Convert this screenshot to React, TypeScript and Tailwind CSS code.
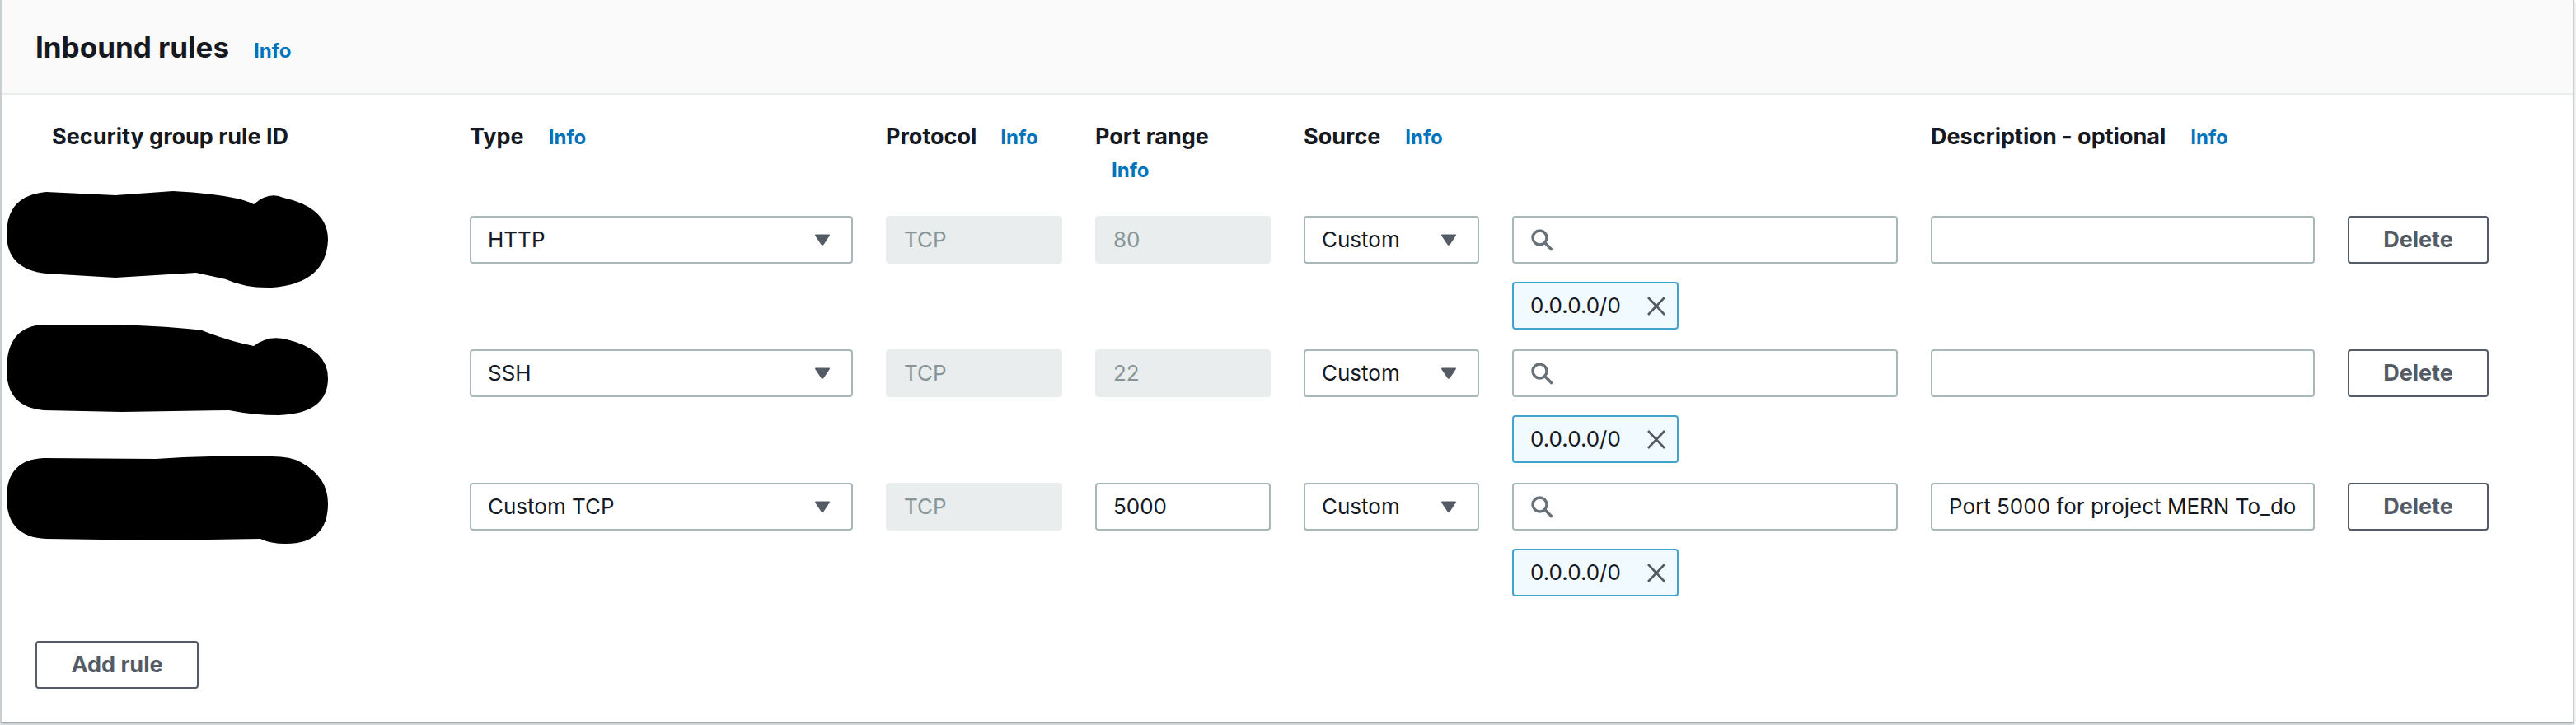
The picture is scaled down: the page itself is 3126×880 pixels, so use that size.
import React from 'react'

const cols = 'grid grid-cols-[488px_465px_214px_213px_213px_468px_466px_171px] gap-x-[40px]'

type Rule = {
  type: string
  port: string
  portEditable?: boolean
  description: string
  blob: { d: string; h: number; top: number }
}

const rules: Rule[] = [
  {
    type: 'HTTP',
    port: '80',
    description: '',
    blob: {
      top: -30,
      h: 118,
      d: 'M48 1 L132 5 L202 0 Q245 2 280 9 Q292 12 300 16 Q318 0 336 8 Q390 20 390 59 Q388 112 322 117 Q290 118 266 107 L230 99 L132 105 L48 100 Q0 95 0 52 Q0 5 48 1 Z',
    },
  },
  {
    type: 'SSH',
    port: '22',
    description: '',
    blob: {
      top: -30,
      h: 111,
      d: 'M45 0 L132 0 Q200 2 237 7 Q270 20 300 26 Q318 12 340 18 Q390 30 390 65 Q390 108 330 110 Q300 110 270 104 L140 106 L45 104 Q0 100 0 55 Q0 2 45 0 Z',
    },
  },
  {
    type: 'Custom TCP',
    port: '5000',
    portEditable: true,
    description: 'Port 5000 for project MERN To_do',
    blob: {
      top: -32,
      h: 107,
      d: 'M45 2 L181 3 Q220 0 259 0 L322 0 Q345 0 357 7 Q390 25 390 57 Q390 106 339 106 Q320 106 308 100 L181 102 L48 100 Q0 98 0 50 Q0 4 45 2 Z',
    },
  },
]

function Info() {
  return <span className="text-[24px] font-bold text-[#0073bb]">Info</span>
}

function Caret() {
  return (
    <svg width="20" height="14" viewBox="0 0 20 14">
      <path d="M2 1.5 H18 L11 12 Q10 13.5 9 12 Z" fill="#545b64" stroke="#545b64" strokeWidth="2" strokeLinejoin="round" />
    </svg>
  )
}

function Select({ value }: { value: string }) {
  return (
    <div className="h-[58px] border-2 border-[#aab7b8] rounded-[4px] bg-white flex items-center justify-between pl-[20px] pr-[25px] text-[26px] leading-[32px] text-[#16191f]">
      <span>{value}</span>
      <Caret />
    </div>
  )
}

function TextBox({ value, disabled }: { value: string; disabled?: boolean }) {
  return (
    <div
      className={
        disabled
          ? 'h-[58px] border-2 border-[#eaeded] rounded-[4px] bg-[#eaeded] flex items-center px-[20px] text-[26px] leading-[32px] text-[#879596]'
          : 'h-[58px] border-2 border-[#aab7b8] rounded-[4px] bg-white flex items-center pl-[20px] pr-[16px] text-[26px] leading-[32px] text-[#16191f]'
      }
    >
      <div className="whitespace-nowrap">{value}</div>
    </div>
  )
}

function SearchBox() {
  return (
    <div className="h-[58px] border-2 border-[#aab7b8] rounded-[4px] bg-white flex items-center pl-[20px]">
      <svg width="30" height="29" viewBox="0 0 30 29" fill="none">
        <circle cx="11.5" cy="11.5" r="8.5" stroke="#687078" strokeWidth="3.4" />
        <path d="M17.8 17.8 L25.5 25.5" stroke="#687078" strokeWidth="3.6" strokeLinecap="round" />
      </svg>
    </div>
  )
}

function Token() {
  return (
    <div className="mt-[22px] w-[202px] h-[58px] border-2 border-[#44a3cc] rounded-[4px] bg-[#f1faff] flex items-center justify-between pl-[20px] pr-[13px] text-[26px] leading-[32px] text-[#16191f]">
      <span>0.0.0.0/0</span>
      <svg width="24" height="25" viewBox="0 0 24 25">
        <path d="M2 2 L22 23 M22 2 L2 23" stroke="#545b64" strokeWidth="2.6" />
      </svg>
    </div>
  )
}

function OutlineButton({ label, className }: { label: string; className: string }) {
  return (
    <button
      className={
        'h-[58px] border-2 border-[#545b64] rounded-[4px] bg-white text-[27px] font-bold text-[#545b64] flex items-center justify-center ' +
        className
      }
    >
      {label}
    </button>
  )
}

function RuleRow({ rule }: { rule: Rule }) {
  return (
    <div className={cols + ' items-start'}>
      <div className="relative h-[58px]">
        {/* redacted rule id */}
        <svg
          className="absolute left-[-34px]"
          style={{ top: rule.blob.top }}
          width="392"
          height={rule.blob.h}
          viewBox={`0 0 392 ${rule.blob.h}`}
        >
          <path d={rule.blob.d} fill="#000" />
        </svg>
      </div>
      <Select value={rule.type} />
      <TextBox value="TCP" disabled />
      <TextBox value={rule.port} disabled={!rule.portEditable} />
      <Select value="Custom" />
      <div className="flex flex-col">
        <SearchBox />
        <Token />
      </div>
      <TextBox value={rule.description} />
      <OutlineButton label="Delete" className="w-full" />
    </div>
  )
}

export default function App() {
  return (
    <div className="w-[3126px] h-[880px] bg-white font-['Inter','Open_Sans',sans-serif]">
      <div className="w-[3124px] border-x-2 border-b-2 border-x-[#c9cfd1] border-b-[#a4adb1] shadow-[0_2px_3px_rgba(0,28,36,0.25)] bg-white">
        <div className="h-[115px] bg-[#fafafa] border-b-2 border-[#eaeded] pl-[41px] pt-[35px] flex items-baseline gap-[30px]">
          <h2 className="text-[35px] leading-[44px] font-bold text-[#16191f]">Inbound rules</h2>
          <Info />
        </div>

        <div className="pl-[40px] pt-[31px] pb-[40px]">
          <div className={cols + ' items-start text-[27px] leading-[40px] font-bold text-[#16191f] mb-[35px]'}>
            <div className="pl-[21px]">Security group rule ID</div>
            <div className="flex items-baseline gap-[30px]">
              <span>Type</span>
              <Info />
            </div>
            <div className="flex items-baseline gap-[29px]">
              <span>Protocol</span>
              <Info />
            </div>
            <div className="flex flex-col">
              <span>Port range</span>
              <span className="pl-[20px] leading-[40px]">
                <Info />
              </span>
            </div>
            <div className="flex items-baseline gap-[30px]">
              <span>Source</span>
              <Info />
            </div>
            <div />
            <div className="flex items-baseline gap-[30px]">
              <span>Description - optional</span>
              <Info />
            </div>
            <div />
          </div>

          <div className="flex flex-col gap-[24px]">
            {rules.map((r) => (
              <RuleRow key={r.type} rule={r} />
            ))}
          </div>

          <div className="mt-[54px]">
            <OutlineButton label="Add rule" className="w-[198px] ml-[1px]" />
          </div>
        </div>
      </div>
    </div>
  )
}
